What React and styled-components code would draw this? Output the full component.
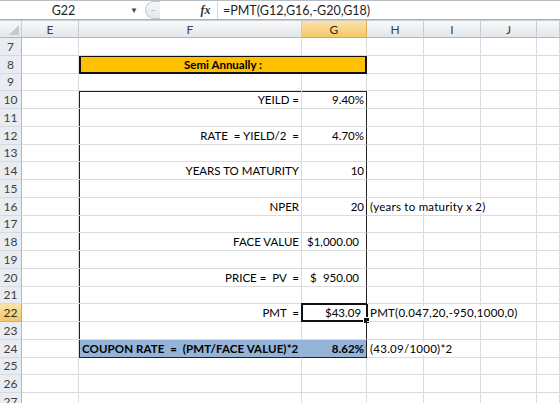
import React from "react";
import styled, { createGlobalStyle, css } from "styled-components";

const GlobalStyle = createGlobalStyle`
  html, body {
    margin: 0;
    padding: 0;
    background: #ffffff;
  }
  body {
    font-family: Lato, "Liberation Sans", sans-serif;
    overflow: hidden;
  }
`;

const Window = styled.div`
  width: 560px;
  height: 403px;
  overflow: hidden;
  background: #ffffff;
  display: flex;
  flex-direction: column;
`;

const FormulaBar = styled.div`
  height: 21px;
  border-top: 1px solid #b9bec5;
  display: flex;
  align-items: stretch;
  background: #ffffff;
  font-size: 12px;
  color: #1e1e1e;
`;

const NameBox = styled.div`
  width: 127px;
  display: flex;
  align-items: center;
  justify-content: center;
  font-size: 12.5px;
`;

const DropArrow = styled.div`
  width: 14px;
  display: flex;
  align-items: center;
  justify-content: center;
  font-size: 8px;
  color: #444;
`;

const Splitter = styled.div`
  width: 57px;
  display: flex;
  align-items: center;
`;

const Pill = styled.div`
  width: 14px;
  height: 16px;
  margin-left: 4px;
  border: 1px solid #c3c7cd;
  border-right: none;
  border-radius: 9px 0 0 9px;
  background: linear-gradient(#f7f8f9, #e3e6ea);
  display: flex;
  align-items: center;
  justify-content: center;
  font-size: 9px;
  color: #aab0b8;
`;

const FxLabel = styled.div`
  width: 15px;
  display: flex;
  align-items: center;
  justify-content: center;
  font-family: "Liberation Serif", serif;
  font-style: italic;
  font-weight: bold;
  font-size: 12px;
  color: #333;
`;

const FormulaInput = styled.div`
  flex: 1;
  margin-left: 4px;
  border-left: 1px solid #d5d9de;
  padding-left: 5px;
  display: flex;
  align-items: center;
  font-size: 12.5px;
  white-space: pre;
`;

const Gap = styled.div`
  height: 4px;
  border-top: 1px solid #a9b0b8;
  background: linear-gradient(#ffffff, #eef0f2);
`;

const Sheet = styled.div`
  display: grid;
  grid-template-columns: 22px 57px 223px 65px 57px 57px 56px 1fr;
  grid-template-rows: 18px;
  grid-auto-rows: 17.75px;
  font-size: 11.5px;
  color: #000;
`;

const Head = styled.div`
  box-sizing: border-box;
  display: flex;
  align-items: center;
  justify-content: center;
  border-right: 1px solid #c6cbd1;
  border-bottom: 1px solid #b2b8bf;
  border-top: 1px solid #c9ced4;
  background: linear-gradient(#f8f9fa, #e3e6ea);
  color: #3b3f44;
  font-size: 12px;
  ${(p) =>
    p.$active &&
    css`
      background: linear-gradient(#fbe3a8, #f3c769);
      border-right-color: #e0ad4f;
      border-bottom: 1px solid #e3a447;
      color: #2e2a20;
    `}
`;

const CornerHead = styled(Head)`
  justify-content: flex-end;
  align-items: flex-end;
  padding: 0 2px 2px 0;
`;

const RowHead = styled.div`
  box-sizing: border-box;
  display: flex;
  align-items: center;
  justify-content: center;
  border-right: 1px solid #b2b8bf;
  border-bottom: 1px solid #d6dade;
  background: #e9ecf0;
  color: #3b3f44;
  font-size: 12px;
  ${(p) =>
    p.$active &&
    css`
      background: linear-gradient(#fbe3a8, #f3c769);
      border-bottom-color: #e0ad4f;
      border-right-color: #e3a447;
      color: #2e2a20;
    `}
`;

const edgeShadow = (frame = "") => {
  const parts = [];
  if (frame.includes("l")) parts.push("inset 1px 0 0 #222");
  if (frame.includes("t")) parts.push("inset 0 1px 0 #222");
  return parts.length ? parts.join(", ") : "none";
};

const Cell = styled.div`
  box-sizing: border-box;
  position: relative;
  display: flex;
  align-items: center;
  justify-content: ${(p) => (p.$align === "right" ? "flex-end" : p.$align === "center" ? "center" : "flex-start")};
  padding: 0 2px 0 3px;
  border-right: 1px solid ${(p) => (p.$frame && p.$frame.includes("r") ? "#222" : p.$fill ? p.$fill : "#dadcdd")};
  border-bottom: 1px solid ${(p) => (p.$frame && p.$frame.includes("b") ? "#222" : p.$fill ? p.$fill : "#dadcdd")};
  box-shadow: ${(p) => edgeShadow(p.$frame)};
  background: ${(p) => p.$fill || "transparent"};
  font-weight: ${(p) => (p.$bold ? 700 : 400)};
  white-space: pre;
  min-width: 0;
`;

const NoteCell = styled(Cell)`
  letter-spacing: 0.25px;
  z-index: 1;
`;

const NoteText = styled.span`
  background: #ffffff;
  padding-right: 1px;
`;

const CouponCell = styled(Cell)`
  font-size: 11.5px;
  letter-spacing: 0.1px;
`;

const Accounting = styled.div`
  flex: 1;
  display: flex;
  justify-content: space-between;
  padding: 0 5px 0 5px;
`;

const TitleCell = styled.div`
  grid-column: span 2;
  box-sizing: border-box;
  margin-top: -1px;
  background: #ffc000;
  border: 2px solid #111;
  display: flex;
  align-items: center;
  justify-content: center;
  font-weight: 700;
`;

const ActiveFrame = styled.div`
  position: absolute;
  inset: -1px -2px -1px -1px;
  border: 2px solid #111;
  pointer-events: none;
`;

const FillHandle = styled.div`
  position: absolute;
  right: -4px;
  bottom: -4px;
  width: 5px;
  height: 5px;
  background: #111;
  border: 1px solid #fff;
`;

const columns = ["E", "F", "G", "H", "I", "J", ""];

const rows = [
  { n: 7 },
  { n: 8, title: true },
  { n: 9 },
  { n: 10, label: "YEILD =", value: "9.40%" },
  { n: 11 },
  { n: 12, label: "RATE  = YIELD/2  =", value: "4.70%" },
  { n: 13 },
  { n: 14, label: "YEARS TO MATURITY", value: "10" },
  { n: 15 },
  { n: 16, label: "NPER", value: "20", note: "(years to maturity x 2)" },
  { n: 17 },
  { n: 18, label: "FACE VALUE", money: "1,000.00" },
  { n: 19 },
  { n: 20, label: "PRICE =  PV  =", money: "950.00" },
  { n: 21 },
  { n: 22, label: "PMT  =", value: "$43.09 ", note: "PMT(0.047,20,-950,1000,0)", active: true },
  { n: 23 },
  { n: 24, coupon: true, value: "8.62%", note: "(43.09/1000)*2" },
  { n: 25 },
  { n: 26 },
  { n: 27 },
];

function frameFor(n, col) {
  if (n < 10 || n > 24) return "";
  let f = col === "F" ? "l" : "r";
  if (n === 10) f += "t";
  if (n === 24) f += "b";
  return f;
}

function SheetRow({ row }) {
  const blue = row.coupon ? "#95b3d7" : null;
  const fF = frameFor(row.n, "F");
  const fG = frameFor(row.n, "G");

  let fCell;
  let gCell = null;
  if (row.title) {
    fCell = <TitleCell>Semi Annually :</TitleCell>;
  } else if (row.coupon) {
    fCell = (
      <CouponCell $fill={blue} $bold $frame={fF}>
        {"COUPON RATE  =  (PMT/FACE VALUE)*2"}
      </CouponCell>
    );
  } else {
    fCell = (
      <Cell $align="right" $frame={fF}>
        {row.label}
      </Cell>
    );
  }

  if (!row.title) {
    gCell = row.money ? (
      <Cell $align="right" $frame={fG}>
        <Accounting>
          <span>$</span>
          <span>{row.money}</span>
        </Accounting>
      </Cell>
    ) : (
      <Cell $align="right" $fill={blue} $bold={row.coupon} $frame={fG}>
        {row.value}
        {row.active && (
          <ActiveFrame>
            <FillHandle />
          </ActiveFrame>
        )}
      </Cell>
    );
  }

  return (
    <>
      <RowHead $active={row.active}>{row.n}</RowHead>
      <Cell />
      {fCell}
      {gCell}
      <NoteCell>{row.note && <NoteText>{row.note}</NoteText>}</NoteCell>
      <Cell />
      <Cell />
      <Cell />
    </>
  );
}

export default function App() {
  return (
    <Window>
      <GlobalStyle />
      <FormulaBar>
        <NameBox>G22</NameBox>
        <DropArrow>▼</DropArrow>
        <Splitter>
          <Pill>−</Pill>
        </Splitter>
        <FxLabel>fx</FxLabel>
        <FormulaInput>=PMT(G12,G16,-G20,G18)</FormulaInput>
      </FormulaBar>
      <Gap />
      <Sheet>
        <CornerHead>
          <svg width="10" height="10" viewBox="0 0 10 10">
            <polygon points="10,0 10,10 0,10" fill="#c4c9cf" />
          </svg>
        </CornerHead>
        {columns.map((c, i) => (
          <Head key={i} $active={c === "G"}>
            {c}
          </Head>
        ))}
        {rows.map((r) => (
          <SheetRow key={r.n} row={r} />
        ))}
      </Sheet>
    </Window>
  );
}
